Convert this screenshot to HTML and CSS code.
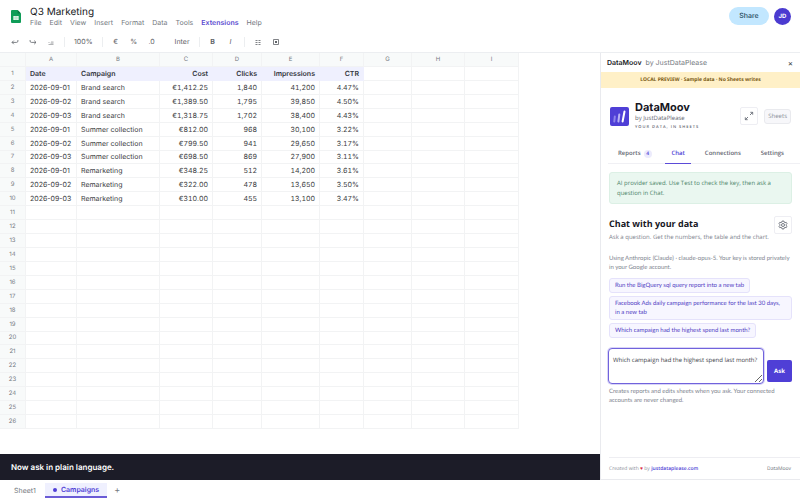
FILE: index.html
```html
<!DOCTYPE html>
<html lang="en">
<head>
<meta charset="utf-8">
<meta name="viewport" content="width=device-width, initial-scale=1">
<title>Q3 Marketing</title>
<link rel="stylesheet" href="styles.css">
</head>
<body>
<header class="topbar">
  <svg class="doc-icon" viewBox="0 0 10 13" aria-hidden="true">
    <path d="M1 0h5.6L10 3.4V12a1 1 0 0 1-1 1H1a1 1 0 0 1-1-1V1a1 1 0 0 1 1-1z" fill="#0f9d58"/>
    <path d="M6.6 0 10 3.4H6.6z" fill="#087a43"/>
    <path d="M2.300 6h5.400v4H2.300z" fill="#dff3e8"/>
    <path d="M2.300 8h5.400M5 6v4" stroke="#8fd3b1" stroke-width=".5"/>
  </svg>
  <div class="doc">
    <h1 class="doc-title">Q3 Marketing</h1>
    <nav class="menu">
      <a href="#">File</a><a href="#">Edit</a><a href="#">View</a><a href="#">Insert</a><a href="#">Format</a><a href="#">Data</a><a href="#">Tools</a><a href="#" class="current">Extensions</a><a href="#">Help</a>
    </nav>
  </div>
  <button class="share">Share</button>
  <span class="avatar">JD</span>
</header>

<div class="toolbar">
  <button aria-label="Undo"><svg viewBox="0 0 8 8"><path d="M2.800 2.600 1 4.400l1.800 1.800M1 4.400h4.600a1.300 1.300 0 0 0 1.300-1.300V2"/></svg></button>
  <button aria-label="Redo"><svg viewBox="0 0 8 8"><path d="M5.200 2.600 7 4.400 5.200 6.200M7 4.400H2.400A1.300 1.300 0 0 1 1.100 3.100V2"/></svg></button>
  <button aria-label="Print"><svg class="faint" viewBox="0 0 8 8"><path d="M1.500 6.500h5M1.500 5l1-1M4 4h2.500M3.500 5.200h3"/></svg></button>
  <span class="rule"></span>
  <button class="zoom">100%</button>
  <span class="rule"></span>
  <button>€</button>
  <button>%</button>
  <button>.0</button>
  <span class="rule hidden"></span>
  <button class="font">Inter</button>
  <span class="rule"></span>
  <button class="bold">B</button>
  <button class="italic">I</button>
  <span class="rule"></span>
  <button aria-label="Borders"><svg viewBox="0 0 8 8"><path d="M1.500 2.500h2M4.500 2.500h2M1.500 4.500h2M4.500 4.500h2M1.500 6.500h2M4.500 6.500h2"/></svg></button>
  <button aria-label="Chart"><svg viewBox="0 0 8 8"><path d="M1.500 1.500h5v5h-5z"/><path d="M3 3h2v2H3z" fill="currentColor" stroke="none"/></svg></button>
</div>

<main class="workspace">
  <section class="sheet">
    <table class="grid">
      <colgroup><col class="c-num"><col class="c-a"><col class="c-b"><col class="c-c"><col class="c-d"><col class="c-e"><col class="c-f"><col class="c-g"><col class="c-h"><col class="c-i"></colgroup>
      <thead><tr><th></th><th>A</th><th>B</th><th>C</th><th>D</th><th>E</th><th>F</th><th>G</th><th>H</th><th>I</th></tr></thead>
      <tbody id="rows"></tbody>
    </table>
    <p class="caption">Now ask in plain language.</p>
  </section>

  <aside class="panel">
    <div class="panel-head"><strong>DataMoov</strong><span>by JustDataPlease</span><button aria-label="Close">×</button></div>
    <p class="notice">LOCAL PREVIEW · Sample data · No Sheets writes</p>
    <div class="brand">
      <svg class="logo" viewBox="0 0 19 19" aria-hidden="true">
        <rect width="19" height="19" rx="2" fill="#4f3fd6"/>
        <g stroke-linecap="round" stroke-width="2" fill="none"><path d="M4.800 9.500 4.300 14.500" stroke="#8e84ea"/><path d="M9.300 7.500 8.400 14.500" stroke="#b9b2f5"/><path d="M14.500 4.500 12.600 14.500" stroke="#fff"/></g>
      </svg>
      <div class="brand-text"><h2>DataMoov</h2><p>by JustDataPlease</p><p class="tag">YOUR DATA, IN SHEETS</p></div>
      <button class="square" aria-label="Expand"><svg viewBox="0 0 10 10"><path d="M6 4l2.500-2.500M6.300 1.300h2.400v2.400M4 6 1.500 8.500M1.300 6.300v2.400h2.400"/></svg></button>
      <span class="chip">Sheets</span>
    </div>
    <nav class="tabs">
      <a href="#">Reports<span class="count">4</span></a><a href="#" class="active">Chat</a><a href="#">Connections</a><a href="#">Settings</a>
    </nav>
    <div class="content">
      <p class="success">AI provider saved. Use Test to check the key, then ask a question in Chat.</p>
      <div class="heading">
        <div><h3>Chat with your data</h3><p>Ask a question. Get the numbers, the table and the chart.</p></div>
        <button class="square" aria-label="Chat settings"><svg viewBox="0 0 10 10"><path d="M4.200 1h1.600l.3 1.100 1 .5 1.100-.3.800 1.400-.8.800v1l.8.800-.8 1.400-1.100-.3-1 .5L5.800 9H4.200l-.3-1.100-1-.5-1.100.3L1 6.300l.8-.8v-1L1 3.700l.8-1.400 1.100.3 1-.5z"/><circle cx="5" cy="5" r="1.500"/></svg></button>
      </div>
      <p class="hint provider">Using Anthropic (Claude) · claude-opus-5. Your key is stored privately in your Google account.</p>
      <div class="prompts">
        <button>Run the BigQuery sql query report into a new tab</button>
        <button>Facebook Ads daily campaign performance for the last 30 days, in a new tab</button>
        <button>Which campaign had the highest spend last month?</button>
      </div>
      <form class="ask">
        <textarea aria-label="Question" rows="2">Which campaign had the highest spend last month?</textarea>
        <button type="button">Ask</button>
      </form>
      <p class="hint">Creates reports and edits sheets when you ask. Your connected accounts are never changed.</p>
    </div>
    <footer class="panel-foot"><span>Created with <i>♥</i> by <a href="#">justdataplease.com</a></span><span class="dark">DataMoov</span></footer>
  </aside>
</main>

<nav class="sheet-tabs">
  <a href="#">Sheet1</a><a href="#" class="active">Campaigns</a><button aria-label="Add sheet">+</button>
</nav>
<script src="script.js"></script>
</body>
</html>
```
FILE: styles.css
```css
* { box-sizing: border-box; }
body, h1, h2, h3, p { margin: 0; }
body {
  min-height: 100vh;
  display: flex;
  flex-direction: column;
  background: #fff;
  color: #3c4043;
  font: 7px/10px Inter, sans-serif;
  text-rendering: geometricPrecision;
}
a { color: inherit; text-decoration: none; }
button, textarea { font: inherit; color: inherit; text-rendering: inherit; }
button { background: none; border: 0; padding: 0; }
svg { display: block; fill: none; stroke: currentColor; }

/* Title and menus */
.topbar { display: flex; align-items: center; height: 32px; padding: 0 9px 0 11px; }
.doc-icon { width: 10px; height: 13px; stroke: none; margin-right: 9px; }
.doc { flex: 1; padding-top: 1px; }
.doc-title { font-size: 10px; line-height: 12px; font-weight: 400; color: #202124; }
.menu { display: flex; gap: 8px; color: #747980; line-height: 10px; }
.menu .current { color: #5b4bd0; font-weight: 600; }
.share { width: 40px; height: 18px; border-radius: 9px; background: #c2e7ff; color: #24495c; font-weight: 500; margin-right: 5px; }
.avatar { width: 17px; height: 17px; border-radius: 50%; background: #4b3bd0; color: #fff; font-size: 6px; font-weight: 700; line-height: 17px; text-align: center; }

.toolbar { display: flex; align-items: center; gap: 8px; height: 20px; padding: 0 10px; color: #5f6368; }
.toolbar button { min-width: 10px; text-align: center; }
.toolbar svg { width: 8px; height: 8px; margin: auto; stroke-width: .8; }
.toolbar .faint { opacity: .6; }
.toolbar .rule { width: 1px; height: 10px; background: #eceef0; }
.toolbar .hidden { background: none; }
.toolbar .zoom { padding: 0 1px; }
.toolbar .font { padding: 0 1px; }
.toolbar .bold { font-weight: 700; }
.toolbar .italic { font-style: italic; }

.workspace { flex: 1; display: grid; grid-template-columns: 3fr 1fr; border-top: 1px solid #eceef1; }
.sheet { display: flex; flex-direction: column; }

/* Spreadsheet */
.grid { width: 519px; height: 376px; border-collapse: separate; border-spacing: 0; table-layout: fixed; font-size: 7px; line-height: 10px; }
.c-num { width: 26px; }
.c-a { width: 51px; }
.c-b { width: 83px; }
.c-c { width: 53px; }
.c-d { width: 49px; }
.c-e { width: 58px; }
.c-f { width: 44px; }
.c-g { width: 48px; }
.c-h { width: 53px; }
.c-i { width: 54px; }
.grid th, .grid td { height: 13px; padding: 1px 4px 0; border-right: 1px solid #f2f3f4; border-bottom: 1px solid #f2f3f4; text-align: left; white-space: nowrap; }
.grid thead th, .grid tbody th { font-size: 6px; font-weight: 400; text-align: center; color: #747980; background: #f8fafa; padding: 1px 0 0; }
.grid thead th { height: 14px; }
.grid .number { text-align: right; font-variant-numeric: tabular-nums; }
.grid .titles td { background: #eff0fe; border-color: #eff0fe; font-weight: 600; color: #33363d; }
.grid .titles td:nth-child(n+8) { background: #fff; border-color: #f2f3f4; }
.caption { margin-top: auto; padding: 8px 11px; background: #1c1c28; color: #fff; font-size: 8px; line-height: 10px; font-weight: 600; }

/* Add-on panel */
.panel { display: flex; flex-direction: column; border-left: 1px solid #e9eaee; border-bottom: 1px solid #e9eaee; font-family: "Open Sans", sans-serif; font-size: 6px; line-height: 9px; color: #5f6570; }
.panel-head { display: flex; gap: 4px; align-items: center; height: 19px; padding: 0 7px 0 6px; font: 7px/10px Inter, sans-serif; color: #747980; }
.panel-head strong { font-weight: 600; color: #202124; }
.panel-head button { margin-left: auto; font-size: 8px; color: #3c4043; }
.notice { background: #fff0c7; color: #7a5a14; font-family: "Noto Sans", sans-serif; font-size: 5px; font-weight: 700; line-height: 16px; text-align: center; }
.brand { display: flex; align-items: center; padding: 12px 9px 0; }
.logo { width: 19px; height: 19px; stroke: none; margin-right: 6px; }
.brand-text { flex: 1; line-height: 9px; }
.brand-text h2 { font: 700 11px/14px Inter, sans-serif; color: #17171f; }
.brand-text .tag { font-size: 4px; letter-spacing: 1px; font-weight: 600; }
.square { width: 18px; height: 18px; border: 1px solid #eeeef3; border-radius: 2px; flex: none; color: #555b66; }
.square svg { width: 10px; height: 10px; margin: auto; stroke-width: .8; }
.chip { margin-left: 6px; padding: 1px 3px; border: 1px solid #e9eaee; border-radius: 3px; background: #f7f7fa; color: #8a8f99; line-height: 11px; }
.tabs { display: flex; justify-content: space-between; margin: 11px 0 0 7px; padding: 0 10px 0 4px; border-bottom: 1px solid #f0f0f4; font-weight: 600; line-height: 20px; }
.tabs a { padding: 0 6px; }
.tabs .active { color: #4f3fd6; box-shadow: 0 1px #5b4bd8; }
.count { display: inline-block; width: 8px; margin-left: 3px; border-radius: 4px; background: #ecebfc; color: #4f3fd6; font-size: 5px; line-height: 8px; text-align: center; }
.content { padding: 8px 8px 0; }
.success { padding: 5px 7px; border: 1px solid #dcf0e5; border-radius: 3px; background: #eaf7f0; color: #4b8468; line-height: 10px; }
.heading { display: flex; justify-content: space-between; margin-top: 12px; }
.heading h3 { font-size: 9px; line-height: 15px; font-weight: 700; color: #17171f; }
.heading p { line-height: 12px; color: #7d828c; }
.hint, .prompts { font-family: Lato, sans-serif; }
.hint { color: #80858f; }
.provider { margin-top: 11px; }
.prompts { display: flex; flex-direction: column; align-items: flex-start; gap: 3px; margin-top: 6px; }
.prompts button { padding: 2px 5px; border: 1px solid #e5e2fb; border-radius: 3px; background: #f7f6ff; color: #5140c4; text-align: left; line-height: 9px; }
.ask { display: flex; align-items: flex-end; gap: 3px; margin: 10px 0 3px -1px; }
.ask textarea { flex: 1; min-width: 0; height: 36px; margin: 0; padding: 6px 4px; border: 1px solid #7163dc; border-radius: 4px; box-shadow: 0 0 0 1px #d9d5f8; line-height: 10px; color: #3c4049; outline: 0; overflow: hidden; }
.ask button { width: 25px; height: 22px; margin-bottom: 2px; border-radius: 2px; background: #4f3fd6; color: #fff; font-weight: 700; }
.panel-foot { display: flex; justify-content: space-between; margin: auto 0 0 8px; padding: 7px 9px 5px 0; border-top: 1px solid #eeeef2; font-size: 5px; line-height: 9px; color: #8b9099; }
.panel-foot i { color: #d9304f; font-style: normal; }
.panel-foot a { color: #4f3fd6; font-weight: 600; }
.panel-foot .dark { color: #666b75; }

.sheet-tabs { display: flex; height: 21px; padding: 3px 9px; line-height: 15px; color: #747980; }
.sheet-tabs a { padding: 0 5px; }
.sheet-tabs .active { display: flex; align-items: center; gap: 4px; margin: 0 7px 0 4px; padding: 0 8px; background: #eff0fe; border-bottom: 2px solid #6a5bd6; color: #4f3fd6; font-weight: 600; }
.sheet-tabs .active::before { content: ""; width: 4px; height: 4px; border-radius: 50%; background: #4f3fd6; }
.sheet-tabs button { font-size: 9px; }
```
FILE: script.js
```js
const data = [
  ["Date", "Campaign", "Cost", "Clicks", "Impressions", "CTR"],
  ["2026-09-01", "Brand search", "€1,412.25", "1,840", "41,200", "4.47%"],
  ["2026-09-02", "Brand search", "€1,389.50", "1,795", "39,850", "4.50%"],
  ["2026-09-03", "Brand search", "€1,318.75", "1,702", "38,400", "4.43%"],
  ["2026-09-01", "Summer collection", "€812.00", "968", "30,100", "3.22%"],
  ["2026-09-02", "Summer collection", "€799.50", "941", "29,650", "3.17%"],
  ["2026-09-03", "Summer collection", "€698.50", "869", "27,900", "3.11%"],
  ["2026-09-01", "Remarketing", "€348.25", "512", "14,200", "3.61%"],
  ["2026-09-02", "Remarketing", "€322.00", "478", "13,650", "3.50%"],
  ["2026-09-03", "Remarketing", "€310.00", "455", "13,100", "3.47%"]
];
const body = document.getElementById("rows");
for (let r = 0; r < 26; r++) {
  const row = body.insertRow();
  if (r === 0) row.className = "titles";
  const head = document.createElement("th");
  head.scope = "row";
  head.textContent = r + 1;
  row.append(head);
  for (let c = 0; c < 9; c++) {
    const cell = row.insertCell();
    cell.textContent = (data[r] || [])[c] || "";
    if (c > 1) cell.className = "number";
  }
}
```
